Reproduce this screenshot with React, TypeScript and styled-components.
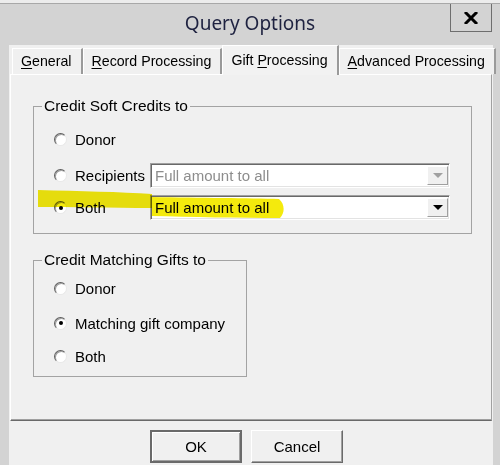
import styled, { createGlobalStyle } from 'styled-components';

const GlobalStyle = createGlobalStyle`
  html, body {
    margin: 0;
    padding: 0;
    background: #d3d3d3;
  }
  body {
    width: 500px;
    height: 465px;
    overflow: hidden;
  }
`;

const Window = styled.div`
  position: relative;
  width: 500px;
  height: 465px;
  display: flex;
  flex-direction: column;
  box-sizing: border-box;
  background: #d3d3d3;
  border-top: 3px solid #ececec;
  font-family: "Liberation Sans", Arial, sans-serif;
  color: #000;
  overflow: hidden;
`;

const TitleBar = styled.div`
  height: 41px;
  display: grid;
  grid-template-columns: 1fr auto 1fr;
  align-items: start;
  border-top: 1px solid #a8a8a8;
`;

const Title = styled.div`
  grid-column: 2;
  padding-top: 7px;
  font-family: "Noto Sans", "Open Sans", sans-serif;
  font-size: 19px;
  line-height: 24px;
  color: #1e2240;
`;

const CloseButton = styled.div`
  grid-column: 3;
  justify-self: end;
  margin-right: 8px;
  width: 42px;
  height: 28px;
  box-sizing: border-box;
  border: 1px solid #6e6e6e;
  border-top: none;
  display: flex;
  align-items: center;
  justify-content: center;
`;

const Client = styled.div`
  flex: 1;
  margin: 0 7px 0 9px;
  background: #f0f0f0;
  display: flex;
  flex-direction: column;
`;

const TabRow = styled.div`
  height: 29px;
  display: flex;
  align-items: flex-end;
  padding-left: 3px;
`;

const Tab = styled.div<{ $active?: boolean }>`
  position: relative;
  z-index: ${({ $active }) => ($active ? 2 : 1)};
  box-sizing: border-box;
  height: ${({ $active }) => ($active ? '30px' : '26px')};
  margin-bottom: ${({ $active }) => ($active ? '-1px' : '0')};
  padding: ${({ $active }) => ($active ? '4px 9px 0 8px' : '2px 9px 0 8px')};
  background: ${({ $active }) => ($active ? '#f2f2f2' : '#f0f0f0')};
  border-top: 1px solid #fff;
  border-left: 1px solid #fff;
  border-right: 2px solid #9a9a9a;
  font-size: 14.2px;
  line-height: 20px;
  white-space: nowrap;
  u {
    text-decoration-thickness: 1px;
    text-underline-offset: 2px;
  }
`;

const Panel = styled.div`
  position: relative;
  z-index: 1;
  box-sizing: border-box;
  height: 347px;
  margin: 0 1px;
  padding-left: 22px;
  background: #f0f0f0;
  border-top: 1px solid #fff;
  border-left: 1px solid #fff;
  border-right: 1px solid #a0a0a0;
  border-bottom: 1px solid #696969;
  box-shadow: inset 0 -1px 0 #a0a0a0;
  display: flex;
  flex-direction: column;
  align-items: flex-start;
`;

const Group = styled.fieldset<{ $width: number; $top: number; $pad: string }>`
  box-sizing: border-box;
  width: ${({ $width }) => $width}px;
  margin: ${({ $top }) => $top}px 0 0 0;
  padding: ${({ $pad }) => $pad};
  border: 1px solid #a3a3a3;
  min-width: 0;
`;

const Legend = styled.legend`
  margin-left: -12px;
  padding: 0 2px;
  font-size: 15.5px;
  line-height: 18px;
`;

const Row = styled.div<{ $top?: number; $h: number }>`
  display: flex;
  align-items: center;
  height: ${({ $h }) => $h}px;
  margin-top: ${({ $top }) => $top ?? 0}px;
`;

const RadioLabel = styled.label<{ $width?: number }>`
  display: flex;
  align-items: center;
  width: ${({ $width }) => ($width ? `${$width}px` : 'auto')};
  font-size: 15px;
  white-space: nowrap;
`;

const RadioCircle = styled.span<{ $checked?: boolean }>`
  position: relative;
  flex: none;
  width: 13px;
  height: 13px;
  box-sizing: border-box;
  margin-right: 8px;
  border-radius: 50%;
  background: #fff;
  border: 1px solid;
  border-color: #5e5e5e #e8e8e8 #e8e8e8 #5e5e5e;
  box-shadow: inset 1px 1px 0 #a0a0a0;
  &::after {
    content: '';
    display: ${({ $checked }) => ($checked ? 'block' : 'none')};
    position: absolute;
    left: 3.5px;
    top: 3.5px;
    width: 4px;
    height: 4px;
    border-radius: 50%;
    background: #000;
  }
`;

const Select = styled.div<{ $disabled?: boolean }>`
  width: 300px;
  height: 25px;
  box-sizing: border-box;
  display: flex;
  align-items: center;
  background: #fff;
  border: 1px solid;
  border-color: #a0a0a0 #fff #fff #a0a0a0;
  box-shadow: inset 1px 1px 0 #696969, inset -1px -1px 0 #e3e3e3;
  font-size: 15px;
  color: ${({ $disabled }) => ($disabled ? '#8d8d8d' : '#000')};
`;

const SelectText = styled.span`
  flex: 1;
  padding-left: 4px;
  white-space: nowrap;
`;

const ArrowButton = styled.span<{ $disabled?: boolean }>`
  width: 21px;
  height: 19px;
  margin-right: 1px;
  box-sizing: border-box;
  display: flex;
  align-items: center;
  justify-content: center;
  background: #f0f0f0;
  border: 1px solid;
  border-color: #fff #a0a0a0 #a0a0a0 #fff;
  &::after {
    content: '';
    border-left: 5px solid transparent;
    border-right: 5px solid transparent;
    border-top: 5px solid ${({ $disabled }) => ($disabled ? '#a0a0a0' : '#000')};
  }
`;

const Footer = styled.div`
  display: flex;
  gap: 9px;
  padding: 9px 0 0 141px;
`;

const Button = styled.div<{ $default?: boolean }>`
  width: 92px;
  height: 33px;
  box-sizing: border-box;
  display: flex;
  align-items: center;
  justify-content: center;
  background: #f0f0f0;
  font-size: 15px;
  border: ${({ $default }) => ($default ? '2px solid #6a6a6a' : '1px solid')};
  border-color: ${({ $default }) => ($default ? '#6a6a6a' : '#fff #6a6a6a #6a6a6a #fff')};
  box-shadow: ${({ $default }) =>
    $default ? 'inset 1px 1px 0 #fff, inset -1px -1px 0 #a0a0a0' : 'inset -1px -1px 0 #a0a0a0'};
`;

const Highlight = styled.svg`
  position: absolute;
  left: 0;
  top: 0;
  width: 500px;
  height: 465px;
  pointer-events: none;
  mix-blend-mode: multiply;
  z-index: 5;
`;

const Radio = ({ label, checked, width }: { label: string; checked?: boolean; width?: number }) => (
  <RadioLabel $width={width}>
    <RadioCircle $checked={checked} />
    {label}
  </RadioLabel>
);

const Dropdown = ({ value, disabled }: { value: string; disabled?: boolean }) => (
  <Select $disabled={disabled}>
    <SelectText>{value}</SelectText>
    <ArrowButton $disabled={disabled} />
  </Select>
);

const App = () => {
  return (
    <Window>
      <GlobalStyle />
      <TitleBar>
        <Title>Query Options</Title>
        <CloseButton>
          <svg width="14" height="12" viewBox="0 0 14 12">
            <path d="M2 1 L12 11 M12 1 L2 11" stroke="#000" strokeWidth="3" strokeLinecap="square" />
          </svg>
        </CloseButton>
      </TitleBar>
      <Client>
        <TabRow>
          <Tab>
            <u>G</u>eneral
          </Tab>
          <Tab>
            <u>R</u>ecord Processing
          </Tab>
          <Tab $active>
            Gift <u>P</u>rocessing
          </Tab>
          <Tab>
            <u>A</u>dvanced Processing
          </Tab>
        </TabRow>
        <Panel>
          <Group $width={439} $top={22} $pad="12px 0 13px 20px">
            <Legend>Credit Soft Credits to</Legend>
            <Row $h={25}>
              <Radio label="Donor" />
            </Row>
            <Row $h={25} $top={11}>
              <Radio label="Recipients" width={96} />
              <Dropdown value="Full amount to all" disabled />
            </Row>
            <Row $h={25} $top={7}>
              <Radio label="Both" checked width={96} />
              <Dropdown value="Full amount to all" />
            </Row>
          </Group>
          <Group $width={214} $top={17} $pad="9px 0 10px 20px">
            <Legend>Credit Matching Gifts to</Legend>
            <Row $h={20}>
              <Radio label="Donor" />
            </Row>
            <Row $h={20} $top={15}>
              <Radio label="Matching gift company" checked />
            </Row>
            <Row $h={20} $top={13}>
              <Radio label="Both" />
            </Row>
          </Group>
        </Panel>
        <Footer>
          <Button $default>OK</Button>
          <Button>Cancel</Button>
        </Footer>
      </Client>
      <Highlight viewBox="0 0 500 465">
        <path
          d="M38 187 C80 188 120 189 152 191 L152 194 C200 195 250 195 279 196 C285 201 285 210 280 215 C240 215 190 214 152 213 L152 205 C110 205 70 204 38 204 Z"
          fill="#f3e900"
          opacity="0.95"
        />
      </Highlight>
    </Window>
  );
};

export default App;
